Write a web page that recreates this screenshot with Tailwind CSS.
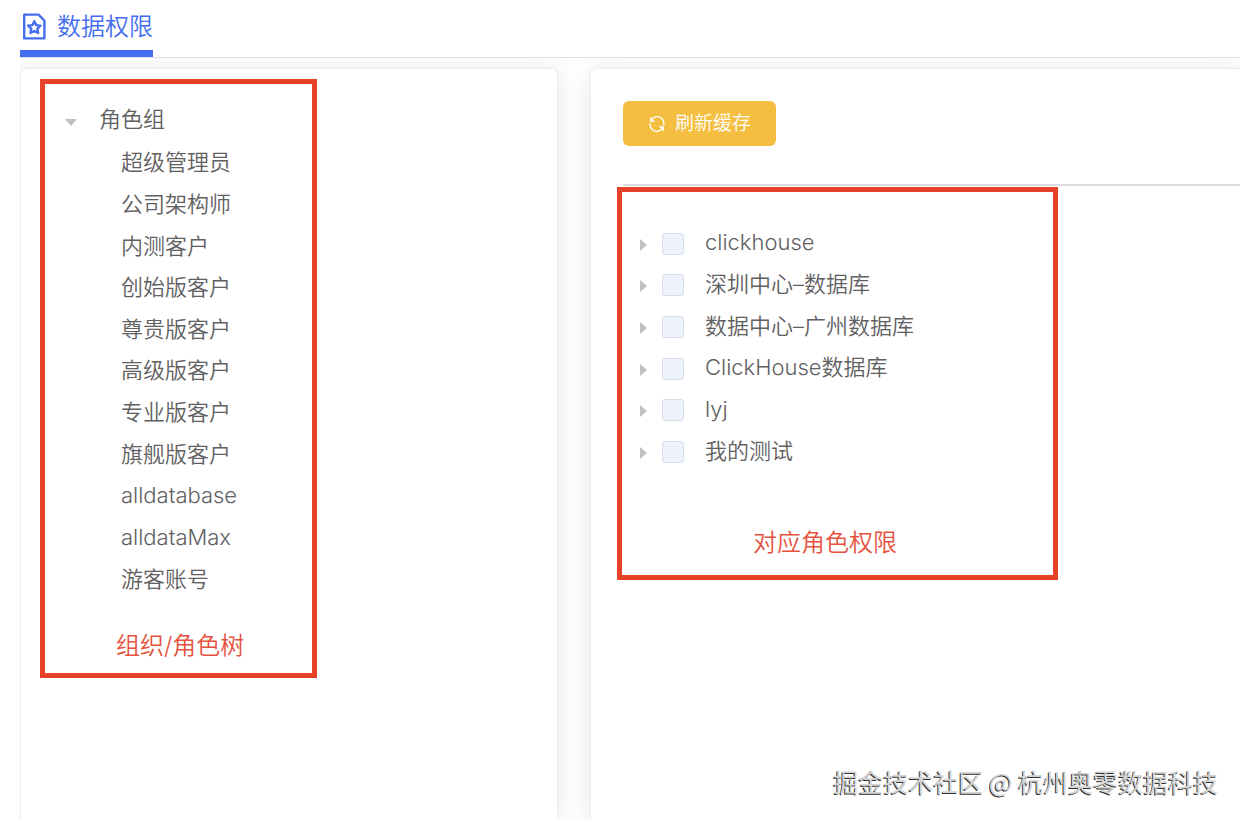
<!DOCTYPE html>
<html lang="zh-CN">
<head>
<meta charset="utf-8">
<title>数据权限</title>
<script src="https://cdn.jsdelivr.net/npm/@tailwindcss/browser@4"></script>
</head>
<body class="relative flex h-screen flex-col overflow-hidden bg-white font-[350] text-[#5f6062] font-['Inter','Noto_Sans_CJK_SC',sans-serif]">
<header class="ml-5 h-[58px] shrink-0 border-b border-[#dcdfe3]">
  <nav class="flex">
    <a href="#" class="flex h-[57px] items-center gap-[11px] border-b-[7px] border-[#446eef] pt-1 pl-0.5 text-2xl text-[#446eef]">
      <svg class="h-7 w-6" viewBox="0 0 24 28" fill="none" stroke="currentColor" stroke-width="2.4" stroke-linejoin="round" aria-hidden="true">
        <path d="M2.2 1.6H16.5L22.4 7.5V25.4H2.2Z"/>
        <path d="M12.3 8.2l1.9 3.9 4.3.6-3.1 3 .7 4.3-3.8-2-3.8 2 .7-4.3-3.1-3 4.3-.6z"/>
      </svg>
      <span>数据权限</span>
    </a>
  </nav>
</header>
<main class="flex flex-1 gap-8 pt-2.5 [clip-path:inset(0_0_0_20px)]">
  <div class="flex w-[45%] shrink-0 pl-5">
    <section class="flex-1 rounded-t-md border border-b-0 border-[#ebedf0] bg-white pt-2.5 pl-[19px] shadow-[0_2px_24px_rgba(0,0,0,0.1)]">
      <div class="w-[277px] border-5 border-[#e8412a] pt-[13px] pb-[9px] text-[22px]">
        <div class="flex h-[45px] items-center pl-5">
          <svg class="mt-1.5 h-[7px] w-3" viewBox="0 0 12 7" aria-hidden="true"><path d="M0 0H12L6 7Z" fill="#c0c0c2"/></svg>
          <span class="ml-[22px]">角色组</span>
        </div>
        <ul class="grid h-[458px] auto-rows-fr items-center pl-[76px]">
          <li>超级管理员</li>
          <li>公司架构师</li>
          <li>内测客户</li>
          <li>创始版客户</li>
          <li>尊贵版客户</li>
          <li>高级版客户</li>
          <li>专业版客户</li>
          <li>旗舰版客户</li>
          <li>alldatabase</li>
          <li>alldataMax</li>
          <li>游客账号</li>
        </ul>
        <p class="mt-7 pl-[71px] text-2xl leading-9 text-[#e5533f]">组织/角色树</p>
      </div>
    </section>
  </div>
  <section class="flex-1 rounded-tl-md border border-r-0 border-b-0 border-[#ebedf0] bg-white pt-8 pl-8 shadow-[0_2px_24px_rgba(0,0,0,0.1)]">
    <button type="button" class="flex h-[45px] items-center gap-2.5 rounded-md bg-[#f4be41] pr-[25px] pl-[26px] text-[19px] text-white">
      <svg class="h-4 w-4" viewBox="0 0 18 18" fill="none" stroke="currentColor" stroke-width="1.5" stroke-linecap="round" stroke-linejoin="round" aria-hidden="true">
        <path d="M2.4 5.6A7.4 7.4 0 0 1 16.6 9.6M2 1.8V5.8H6"/>
        <path d="M15.6 12.4A7.4 7.4 0 0 1 1.4 8.4M16 16.2V12.2H12"/>
      </svg>
      <span class="pt-0.5">刷新缓存</span>
    </button>
    <hr class="mt-[38px] border-t-2 border-[#dcdde0]">
    <div class="mt-px -ml-1.5 w-[441px] border-5 border-[#e8412a] pt-[30px] pb-3.5 text-[22px]">
      <ul class="grid h-[250px] auto-rows-fr pl-[18px]">
        <li class="flex items-center"><svg class="mt-1 h-3 w-[7px]" viewBox="0 0 7 12" aria-hidden="true"><path d="M0 0V12L7 6Z" fill="#c0c0c2"/></svg><label class="flex items-center"><input type="checkbox" class="mt-0.5 mr-[21px] ml-[15px] size-[22px] appearance-none rounded-[3px] border border-[#d8dee9] bg-[#edf2fc]"><span>clickhouse</span></label></li>
        <li class="flex items-center"><svg class="mt-1 h-3 w-[7px]" viewBox="0 0 7 12" aria-hidden="true"><path d="M0 0V12L7 6Z" fill="#c0c0c2"/></svg><label class="flex items-center"><input type="checkbox" class="mt-0.5 mr-[21px] ml-[15px] size-[22px] appearance-none rounded-[3px] border border-[#d8dee9] bg-[#edf2fc]"><span>深圳中心–数据库</span></label></li>
        <li class="flex items-center"><svg class="mt-1 h-3 w-[7px]" viewBox="0 0 7 12" aria-hidden="true"><path d="M0 0V12L7 6Z" fill="#c0c0c2"/></svg><label class="flex items-center"><input type="checkbox" class="mt-0.5 mr-[21px] ml-[15px] size-[22px] appearance-none rounded-[3px] border border-[#d8dee9] bg-[#edf2fc]"><span>数据中心–广州数据库</span></label></li>
        <li class="flex items-center"><svg class="mt-1 h-3 w-[7px]" viewBox="0 0 7 12" aria-hidden="true"><path d="M0 0V12L7 6Z" fill="#c0c0c2"/></svg><label class="flex items-center"><input type="checkbox" class="mt-0.5 mr-[21px] ml-[15px] size-[22px] appearance-none rounded-[3px] border border-[#d8dee9] bg-[#edf2fc]"><span>ClickHouse数据库</span></label></li>
        <li class="flex items-center"><svg class="mt-1 h-3 w-[7px]" viewBox="0 0 7 12" aria-hidden="true"><path d="M0 0V12L7 6Z" fill="#c0c0c2"/></svg><label class="flex items-center"><input type="checkbox" class="mt-0.5 mr-[21px] ml-[15px] size-[22px] appearance-none rounded-[3px] border border-[#d8dee9] bg-[#edf2fc]"><span>lyj</span></label></li>
        <li class="flex items-center"><svg class="mt-1 h-3 w-[7px]" viewBox="0 0 7 12" aria-hidden="true"><path d="M0 0V12L7 6Z" fill="#c0c0c2"/></svg><label class="flex items-center"><input type="checkbox" class="mt-0.5 mr-[21px] ml-[15px] size-[22px] appearance-none rounded-[3px] border border-[#d8dee9] bg-[#edf2fc]"><span>我的测试</span></label></li>
      </ul>
      <p class="mt-[53px] pl-[131px] text-2xl leading-9 text-[#e5533f]">对应角色权限</p>
    </div>
  </section>
</main>
<p class="absolute right-[22px] bottom-[21px] text-[25px] leading-9 font-normal whitespace-nowrap text-[#d4d4d4] font-['Noto_Sans_CJK_SC',sans-serif] [text-shadow:-1px_1px_0_#333]">掘金技术社区 @ 杭州奥零数据科技</p>
</body>
</html>
